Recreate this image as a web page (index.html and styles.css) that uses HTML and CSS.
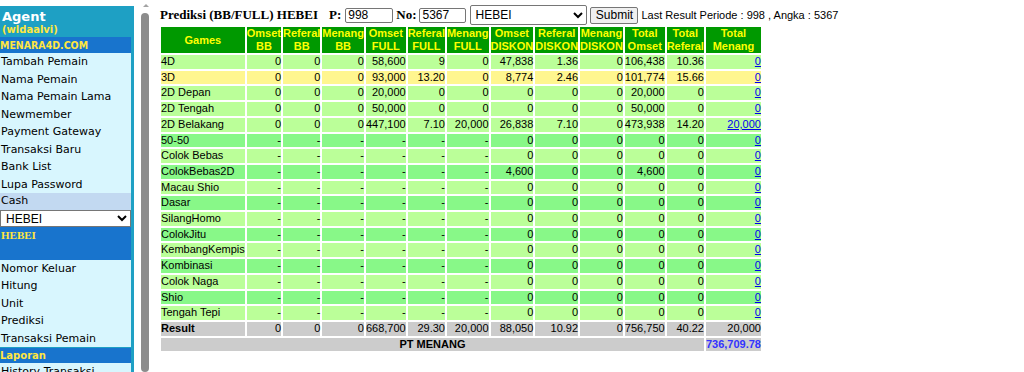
FILE: index.html
```html
<!DOCTYPE html>
<html lang="en">
  <head>
    <meta charset="UTF-8" />
    <title>Prediksi</title>
    <link rel="stylesheet" href="styles.css">
  </head>
  <body>
    <div class="left-frame">
      <div class="sidebar">
        <div class="agent-head">
          <div class="agent-title">Agent</div>
          <div class="agent-name">(wldaalvi)</div>
        </div>
        <div class="band">MENARA4D.COM</div>
        <div class="menu">
          <a href="#">Tambah Pemain</a>
          <a href="#">Nama Pemain</a>
          <a href="#">Nama Pemain Lama</a>
          <a href="#">Newmember</a>
          <a href="#">Payment Gateway</a>
          <a href="#">Transaksi Baru</a>
          <a href="#">Bank List</a>
          <a href="#">Lupa Password</a>
          <a href="#" class="active">Cash</a>
        </div>
        <select class="side-select">
          <option>HEBEI</option>
        </select>
        <div class="band band-tall">HEBEI</div>
        <div class="menu">
          <a href="#">Nomor Keluar</a>
          <a href="#">Hitung</a>
          <a href="#">Unit</a>
          <a href="#">Prediksi</a>
          <a href="#">Transaksi Pemain</a>
        </div>
        <div class="band band-laporan">Laporan</div>
        <div class="menu">
          <a href="#">History Transaksi</a>
        </div>
      </div>
      <div class="scrollbar">
        <div class="scroll-arrow"></div>
        <div class="scroll-thumb"></div>
      </div>
    </div>

    <div class="main">
      <form class="filter">
        <span class="page-title">Prediksi (BB/FULL) HEBEI</span>
        <span class="lbl lbl-p">P:</span>
        <input class="text-input input-p" type="text" value="998">
        <span class="lbl lbl-no">No:</span>
        <input class="text-input input-no" type="text" value="5367">
        <select class="pasaran-select">
          <option>HEBEI</option>
        </select>
        <button type="button" class="submit-button">Submit</button>
        <span class="last-result">Last Result Periode : 998 , Angka : 5367</span>
      </form>

      <table class="prediksi">
        <tr>
          <th>Games</th>
          <th>Omset<br>BB</th><th>Referal<br>BB</th><th>Menang<br>BB</th>
          <th>Omset<br>FULL</th><th>Referal<br>FULL</th><th>Menang<br>FULL</th>
          <th>Omset<br>DISKON</th><th>Referal<br>DISKON</th><th>Menang<br>DISKON</th>
          <th>Total<br>Omset</th><th>Total<br>Referal</th><th>Total<br>Menang</th>
        </tr>
        <tr class="light">
          <td>4D</td><td>0</td><td>0</td><td>0</td><td>58,600</td><td>9</td><td>0</td>
          <td>47,838</td><td>1.36</td><td>0</td><td>106,438</td><td>10.36</td><td><a href="#">0</a></td>
        </tr>
        <tr class="yellow">
          <td>3D</td><td>0</td><td>0</td><td>0</td><td>93,000</td><td>13.20</td><td>0</td>
          <td>8,774</td><td>2.46</td><td>0</td><td>101,774</td><td>15.66</td><td><a href="#">0</a></td>
        </tr>
        <tr class="light">
          <td>2D Depan</td><td>0</td><td>0</td><td>0</td><td>20,000</td><td>0</td><td>0</td>
          <td>0</td><td>0</td><td>0</td><td>20,000</td><td>0</td><td><a href="#">0</a></td>
        </tr>
        <tr class="light">
          <td>2D Tengah</td><td>0</td><td>0</td><td>0</td><td>50,000</td><td>0</td><td>0</td>
          <td>0</td><td>0</td><td>0</td><td>50,000</td><td>0</td><td><a href="#">0</a></td>
        </tr>
        <tr class="light">
          <td>2D Belakang</td><td>0</td><td>0</td><td>0</td><td>447,100</td><td>7.10</td><td>20,000</td>
          <td>26,838</td><td>7.10</td><td>0</td><td>473,938</td><td>14.20</td><td><a href="#">20,000</a></td>
        </tr>
        <tr class="dark">
          <td>50-50</td><td>-</td><td>-</td><td>-</td><td>-</td><td>-</td><td>-</td>
          <td>0</td><td>0</td><td>0</td><td>0</td><td>0</td><td><a href="#">0</a></td>
        </tr>
        <tr class="light">
          <td>Colok Bebas</td><td>-</td><td>-</td><td>-</td><td>-</td><td>-</td><td>-</td>
          <td>0</td><td>0</td><td>0</td><td>0</td><td>0</td><td><a href="#">0</a></td>
        </tr>
        <tr class="dark">
          <td>ColokBebas2D</td><td>-</td><td>-</td><td>-</td><td>-</td><td>-</td><td>-</td>
          <td>4,600</td><td>0</td><td>0</td><td>4,600</td><td>0</td><td><a href="#">0</a></td>
        </tr>
        <tr class="light">
          <td>Macau Shio</td><td>-</td><td>-</td><td>-</td><td>-</td><td>-</td><td>-</td>
          <td>0</td><td>0</td><td>0</td><td>0</td><td>0</td><td><a href="#">0</a></td>
        </tr>
        <tr class="dark">
          <td>Dasar</td><td>-</td><td>-</td><td>-</td><td>-</td><td>-</td><td>-</td>
          <td>0</td><td>0</td><td>0</td><td>0</td><td>0</td><td><a href="#">0</a></td>
        </tr>
        <tr class="light">
          <td>SilangHomo</td><td>-</td><td>-</td><td>-</td><td>-</td><td>-</td><td>-</td>
          <td>0</td><td>0</td><td>0</td><td>0</td><td>0</td><td><a href="#">0</a></td>
        </tr>
        <tr class="dark">
          <td>ColokJitu</td><td>-</td><td>-</td><td>-</td><td>-</td><td>-</td><td>-</td>
          <td>0</td><td>0</td><td>0</td><td>0</td><td>0</td><td><a href="#">0</a></td>
        </tr>
        <tr class="light">
          <td>KembangKempis</td><td>-</td><td>-</td><td>-</td><td>-</td><td>-</td><td>-</td>
          <td>0</td><td>0</td><td>0</td><td>0</td><td>0</td><td><a href="#">0</a></td>
        </tr>
        <tr class="dark">
          <td>Kombinasi</td><td>-</td><td>-</td><td>-</td><td>-</td><td>-</td><td>-</td>
          <td>0</td><td>0</td><td>0</td><td>0</td><td>0</td><td><a href="#">0</a></td>
        </tr>
        <tr class="light">
          <td>Colok Naga</td><td>-</td><td>-</td><td>-</td><td>-</td><td>-</td><td>-</td>
          <td>0</td><td>0</td><td>0</td><td>0</td><td>0</td><td><a href="#">0</a></td>
        </tr>
        <tr class="dark">
          <td>Shio</td><td>-</td><td>-</td><td>-</td><td>-</td><td>-</td><td>-</td>
          <td>0</td><td>0</td><td>0</td><td>0</td><td>0</td><td><a href="#">0</a></td>
        </tr>
        <tr class="light">
          <td>Tengah Tepi</td><td>-</td><td>-</td><td>-</td><td>-</td><td>-</td><td>-</td>
          <td>0</td><td>0</td><td>0</td><td>0</td><td>0</td><td><a href="#">0</a></td>
        </tr>
        <tr class="result">
          <td>Result</td><td>0</td><td>0</td><td>0</td><td>668,700</td><td>29.30</td><td>20,000</td>
          <td>88,050</td><td>10.92</td><td>0</td><td>756,750</td><td>40.22</td><td>20,000</td>
        </tr>
        <tr class="result">
          <td colspan="12" class="pt-label">PT MENANG</td>
          <td class="pt-value">736,709.78</td>
        </tr>
      </table>
    </div>
  </body>
</html>
```

FILE: styles.css
```css
body{
  margin: 0;
  display: flex;
  background-color: white;
  font-family: "Liberation Serif", serif;
  height: 372px;
  overflow: hidden;
}

/* left frame */
.left-frame{
  width: 152px;
  flex-shrink: 0;
  display: flex;
}

.sidebar{
  width: 131px;
  padding-right: 3px;
  margin-top: 6px;
  align-self: flex-start;
  background-color: #1ea0c4;
  font-family: "DejaVu Sans", sans-serif;
}

.agent-head{
  padding: 3px 0 1px 2px;
}

.agent-title{
  color: white;
  font-size: 13px;
  font-weight: bold;
  line-height: 15px;
}

.agent-name{
  color: #ffe640;
  font-size: 10px;
  font-weight: bold;
  line-height: 12px;
}

.band{
  background-color: #1874cd;
  color: #ffe640;
  font-family: "DejaVu Sans Condensed", "DejaVu Sans", sans-serif;
  font-size: 10.5px;
  font-weight: bold;
  height: 16px;
  line-height: 16px;
}

.band-tall{
  height: 33px;
  line-height: 16px;
  font-family: "Liberation Serif", serif;
  font-size: 11px;
  padding-left: 1px;
}

.band-laporan{
  height: 15px;
  line-height: 15px;
  font-family: "DejaVu Sans", sans-serif;
  font-size: 10px;
  margin-top: 1px;
}

.menu a{
  display: block;
  background-color: #d8f6fe;
  color: black;
  text-decoration: none;
  font-size: 11px;
  line-height: 17.5px;
  padding-left: 1px;
}

.menu a.active{
  background-color: #c2d9f1;
  line-height: 16.6px;
}

.side-select{
  display: block;
  width: 131px;
  height: 17px;
  margin: 0;
  padding: 0 0 0 1px;
  border: 1px solid #767676;
  border-radius: 0;
  background-color: white;
  font-family: "Liberation Sans", sans-serif;
  font-size: 12px;
}

.scrollbar{
  width: 12px;
  margin-left: 6px;
  display: flex;
  flex-direction: column;
  align-items: flex-start;
}

.scroll-arrow{
  margin: 4px 0 0 3px;
  width: 0;
  height: 0;
  border-left: 3px solid transparent;
  border-right: 3px solid transparent;
  border-bottom: 3px solid #a3a3a3;
}

.scroll-thumb{
  margin: 6px 0 0 1px;
  width: 8px;
  height: 400px;
  border-radius: 4px;
  background-color: #8c8c8c;
}

/* main frame */
.main{
  padding: 5px 0 0 8px;
}

.filter{
  display: flex;
  align-items: center;
  height: 20px;
  margin: 0;
  white-space: nowrap;
}

.page-title,
.lbl{
  font-size: 13px;
  font-weight: bold;
}

.lbl-p{
  margin-left: 11px;
}

.lbl-no{
  margin-left: 3px;
}

.text-input{
  height: 15px;
  box-sizing: border-box;
  margin: 0;
  padding: 0 2px;
  border: 1px solid #767676;
  border-radius: 2px;
  font-family: "Liberation Sans", sans-serif;
  font-size: 12px;
}

.input-p{
  width: 48px;
  margin-left: 4px;
}

.input-no{
  width: 47px;
  margin-left: 3px;
}

.pasaran-select{
  width: 117px;
  height: 20px;
  margin: 0 0 0 4px;
  padding: 0;
  border: 1px solid #767676;
  border-radius: 2px;
  background-color: white;
  font-family: "Liberation Sans", sans-serif;
  font-size: 12px;
}

.submit-button{
  width: 48px;
  height: 17px;
  margin-left: 3px;
  padding: 0;
  border: 1px solid #767676;
  border-radius: 2px;
  background-color: #efefef;
  font-family: "Liberation Sans", sans-serif;
  font-size: 12px;
}

.last-result{
  margin-left: 3px;
  font-family: "Liberation Sans", sans-serif;
  font-size: 11px;
}

.prediksi{
  border-spacing: 2px;
  margin-left: -1px;
  font-family: "Liberation Sans", sans-serif;
  font-size: 11px;
}

.prediksi th{
  background-color: #009900;
  color: #ffff00;
  font-weight: bold;
  padding: 0;
  line-height: 13px;
  text-align: center;
}

.prediksi td{
  padding: 0;
  line-height: 13.7px;
  text-align: right;
  white-space: nowrap;
}

.prediksi td:first-child{
  text-align: left;
}

.prediksi a{
  color: #0000ee;
}

.light td{
  background-color: #bbff99;
}

.dark td{
  background-color: #88f888;
}

.yellow td{
  background-color: #fff68f;
}

.result td{
  background-color: #cccccc;
}

.result td:first-child{
  font-weight: bold;
}

.prediksi td.pt-label{
  text-align: center;
}

.pt-value{
  color: #3333ff;
  font-weight: bold;
}
```
